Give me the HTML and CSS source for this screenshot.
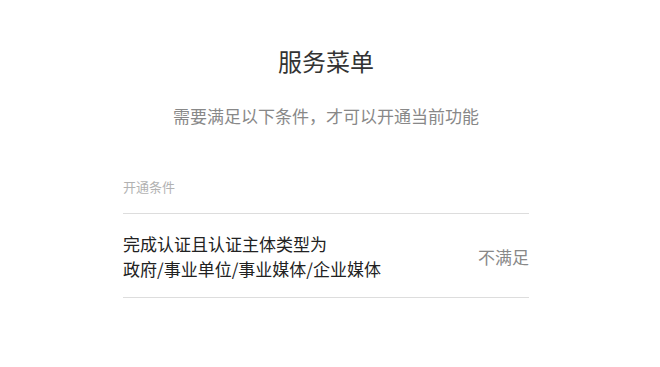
FILE: index.html
```html
<!DOCTYPE html>
<html lang="zh-CN">
<head>
    <meta charset="UTF-8">
    <meta name="viewport" content="width=device-width, initial-scale=1.0">
    <title>服务菜单</title>
    <link rel="stylesheet" href="styles.css">
</head>
<body>
    <div class="page">
        <h1 class="title">服务菜单</h1>
        <p class="subtitle">需要满足以下条件，才可以开通当前功能</p>

        <div class="conditions">
            <div class="conditions-head">开通条件</div>
            <div class="condition-row">
                <div class="condition-text">完成认证且认证主体类型为<br>政府/事业单位/事业媒体/企业媒体</div>
                <div class="condition-status">不满足</div>
            </div>
        </div>
    </div>
</body>
</html>
```

FILE: styles.css
```css
body {
    margin: 0;
    background: #fff;
    font-family: "Microsoft YaHei", "Noto Sans CJK SC", "Noto Sans", sans-serif;
}
.page {
    width: 652px;
    padding-top: 45px;
}
.title {
    margin: 0;
    font-size: 24px;
    line-height: 32px;
    font-weight: normal;
    color: #333;
    text-align: center;
}
.subtitle {
    margin: 27px 0 0;
    font-size: 17px;
    line-height: 24px;
    color: #888;
    text-align: center;
}
.conditions {
    width: 406px;
    margin: 49px auto 0;
}
.conditions-head {
    font-size: 13px;
    line-height: 20px;
    color: #b2b2b2;
    padding-bottom: 16px;
    border-bottom: 1px solid #ddd;
}
.condition-row {
    display: flex;
    align-items: center;
    justify-content: space-between;
    padding: 17px 0 16px;
    border-bottom: 1px solid #ddd;
}
.condition-text {
    font-size: 17px;
    line-height: 25px;
    color: #222;
}
.condition-status {
    font-size: 17px;
    line-height: 25px;
    color: #888;
}
```
